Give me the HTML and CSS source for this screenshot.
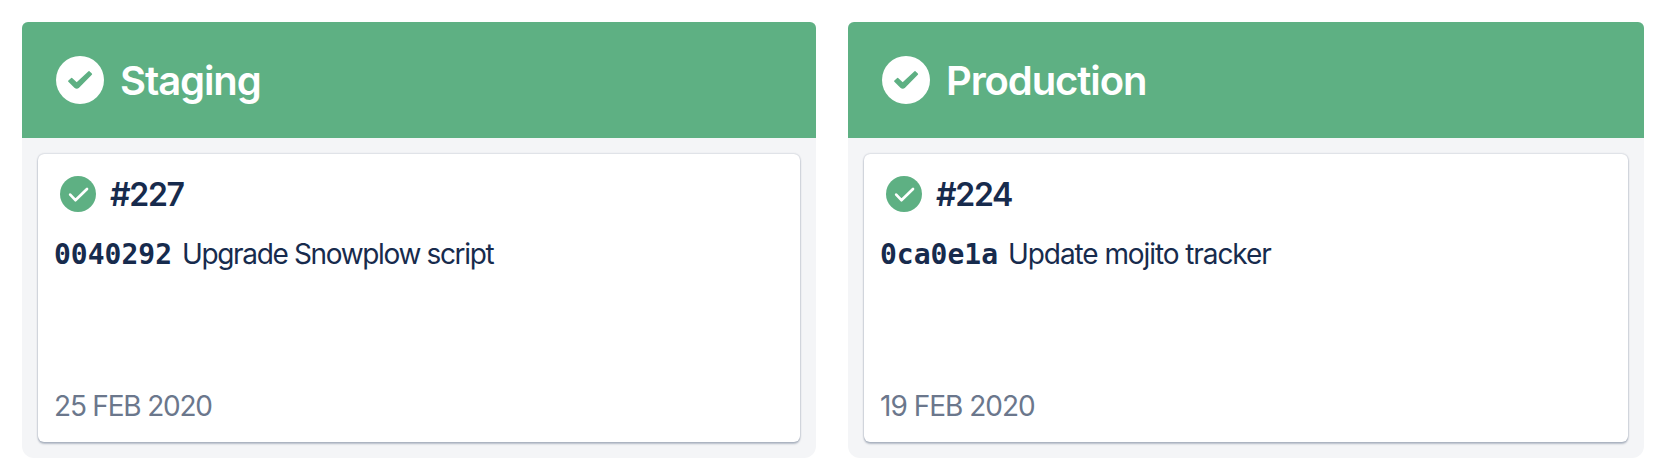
FILE: index.html
```html
<!DOCTYPE html>
<html lang="en">
<head>
<meta charset="utf-8">
<title>Deployments</title>
<link rel="stylesheet" href="styles.css">
</head>
<body>
<main class="board">
  <section class="column">
    <header class="column-header">
      <svg class="env-icon" viewBox="0 0 48 48"><circle cx="24" cy="24" r="24" fill="#fff"/><path d="M13 25.2L15.8 22.8L20.7 27.4L33.1 16L35.2 18.2L22.4 31Q20.8 32.6 19 31Z" fill="#5eb083" stroke="#5eb083" stroke-width="1.8" stroke-linejoin="round"/></svg>
      <h2 class="env-name staging">Staging</h2>
    </header>
    <article class="card">
      <div class="build">
        <svg class="build-icon" viewBox="0 0 36 36"><circle cx="18" cy="18" r="18" fill="#5eb083"/><path d="M10.2 18.6l5.2 5.6L27 13" fill="none" stroke="#fff" stroke-width="2.7" stroke-linecap="round" stroke-linejoin="round"/></svg>
        <h3 class="build-number">#227</h3>
      </div>
      <p class="commit"><code class="hash">0040292</code><span class="message message-snowplow">Upgrade Snowplow script</span></p>
      <time class="date date-staging">25 FEB 2020</time>
    </article>
  </section>
  <section class="column">
    <header class="column-header">
      <svg class="env-icon" viewBox="0 0 48 48"><circle cx="24" cy="24" r="24" fill="#fff"/><path d="M13 25.2L15.8 22.8L20.7 27.4L33.1 16L35.2 18.2L22.4 31Q20.8 32.6 19 31Z" fill="#5eb083" stroke="#5eb083" stroke-width="1.8" stroke-linejoin="round"/></svg>
      <h2 class="env-name production">Production</h2>
    </header>
    <article class="card">
      <div class="build">
        <svg class="build-icon" viewBox="0 0 36 36"><circle cx="18" cy="18" r="18" fill="#5eb083"/><path d="M10.2 18.6l5.2 5.6L27 13" fill="none" stroke="#fff" stroke-width="2.7" stroke-linecap="round" stroke-linejoin="round"/></svg>
        <h3 class="build-number">#224</h3>
      </div>
      <p class="commit"><code class="hash">0ca0e1a</code><span class="message">Update mojito tracker</span></p>
      <time class="date">19 FEB 2020</time>
    </article>
  </section>
</main>
</body>
</html>
```
FILE: styles.css
```css
* { box-sizing: border-box; }
body {
  margin: 0;
  background: #fff;
  color: #172b4d;
  font-family: Inter, "Liberation Sans", sans-serif;
}
.board {
  display: grid;
  grid-template-columns: 794px 796px;
  gap: 32px;
  height: 474px;
  padding: 22px 14px 16px 22px;
}
.column {
  display: flex;
  flex-direction: column;
  padding-bottom: 16px;
  border-radius: 6px 6px 12px 12px;
  background: #f4f5f7;
  overflow: hidden;
}
.column-header {
  display: flex;
  align-items: center;
  gap: 16px;
  height: 116px;
  padding: 0 34px;
  background: #5eb083;
  color: #fff;
}
.env-icon { width: 48px; height: 48px; flex: none; }
.env-name {
  margin: 0;
  padding-top: 1px;
  font-size: 40px;
  line-height: 48px;
  font-weight: 600;
  letter-spacing: -1.1px;
}
.card {
  display: flex;
  flex-direction: column;
  flex: 1;
  margin: 16px 16px 0;
  padding: 20px 16px;
  border-radius: 6px;
  background: #fff;
  box-shadow: 0 2px 2px rgba(9, 30, 66, 0.25), 0 0 2px rgba(9, 30, 66, 0.31);
}
.build {
  display: flex;
  align-items: center;
  gap: 14px;
  height: 40px;
  padding-left: 6px;
}
.build-icon { width: 36px; height: 36px; flex: none; }
.build-number {
  margin: 0;
  padding-top: 2px;
  font-size: 32px;
  line-height: 40px;
  font-weight: 600;
  letter-spacing: -1.3px;
}
.commit {
  display: flex;
  align-items: baseline;
  gap: 10px;
  margin: 20px 0 0;
  font-size: 28px;
  line-height: 40px;
}
.hash {
  font-family: "DejaVu Sans Mono", monospace;
  font-size: 28px;
  font-weight: 700;
}
.message { letter-spacing: -1.08px; white-space: nowrap; }
.message-snowplow { letter-spacing: -1.35px; }
.date {
  margin-top: auto;
  font-size: 28px;
  line-height: 32px;
  letter-spacing: -1px;
  color: #6b778c;
}
.date-staging { letter-spacing: -1.2px; }
```
